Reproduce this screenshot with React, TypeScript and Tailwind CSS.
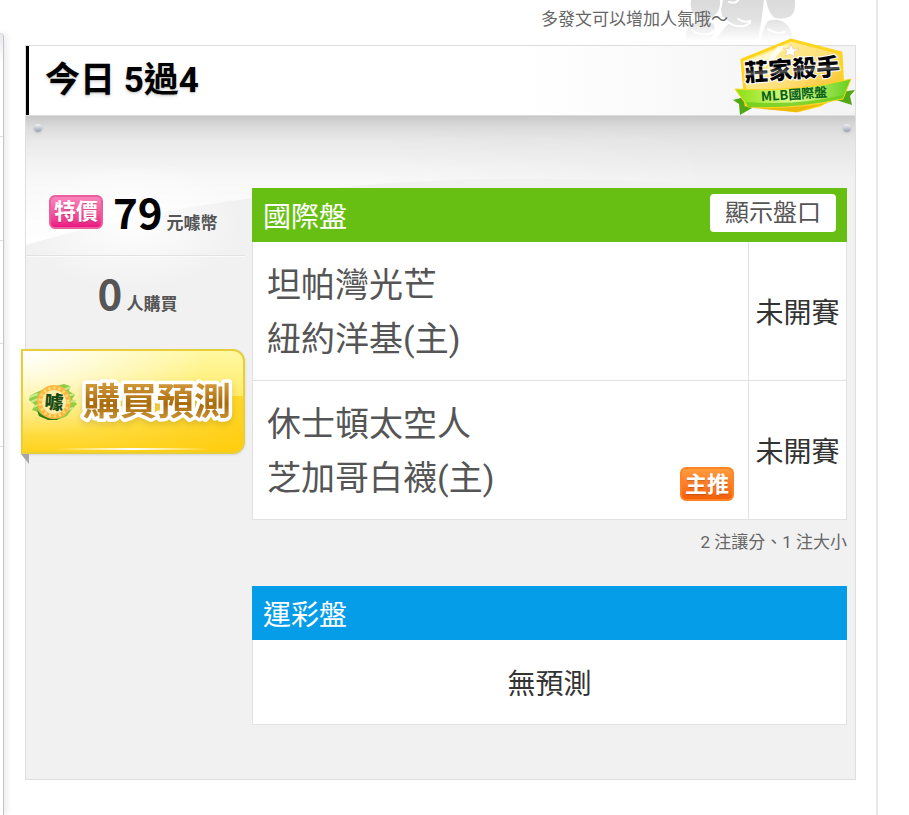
import { useState } from 'react';

type Game = {
  away: string;
  home: string;
  status: string;
  featured?: boolean;
};

const games: Game[] = [
  { away: '坦帕灣光芒', home: '紐約洋基(主)', status: '未開賽' },
  { away: '休士頓太空人', home: '芝加哥白襪(主)', status: '未開賽', featured: true },
];

function MascotMark() {
  return (
    <svg className="absolute top-0 right-20 h-10 w-28" viewBox="0 0 112 40" aria-hidden="true">
      <defs>
        <linearGradient id="mascot" x1="0" y1="0" x2="0" y2="40" gradientUnits="userSpaceOnUse">
          <stop offset="0" stopColor="#dadada" />
          <stop offset="0.5" stopColor="#e2e2e2" />
          <stop offset="1" stopColor="#fdfdfd" />
        </linearGradient>
      </defs>
      <g fill="url(#mascot)">
        <path d="M7 0H36Q37 8 32 14Q26 21 17 19Q5 15 7 0Z" />
        <path d="M4 28Q10 20 22 21Q33 22 30 32L27 40H2Q1 33 4 28Z" />
        <path d="M39 0H80Q78 20 74 40H31Q38 30 45 23Q37 18 37 10Z" />
        <path d="M82 0H111Q112 11 107 16Q100 20 91 18Q85 15 82 0Z" />
        <path d="M84 21Q96 17 103 25Q110 32 107 40H77Q79 28 84 21Z" />
      </g>
      <g fill="none" stroke="#fff" strokeWidth="2" strokeLinecap="round">
        <path d="M45 2Q52 4 54 0M40 18Q48 28 60 26Q67 24 66 21Q60 23 54 19" />
        <path d="M8 30Q17 37 28 33Q30 31 28 30M84 29Q92 35 101 32" />
      </g>
    </svg>
  );
}

function KillerBadge() {
  return (
    <svg className="absolute -top-2 right-0 h-20 w-31" viewBox="0 0 124 80" role="img" aria-label="莊家殺手 MLB國際盤">
      <defs>
        <linearGradient id="shield" x1="0" y1="0" x2="1" y2="1">
          <stop offset="0" stopColor="#fff5a8" />
          <stop offset="0.5" stopColor="#ffe07a" />
          <stop offset="1" stopColor="#f5b400" />
        </linearGradient>
        <linearGradient id="ribbon" x1="0" y1="0" x2="1" y2="0">
          <stop offset="0" stopColor="#8be00d" />
          <stop offset="0.5" stopColor="#dcfc91" />
          <stop offset="1" stopColor="#65cf1b" />
        </linearGradient>
        <linearGradient id="ink" x1="0" y1="0" x2="0" y2="1">
          <stop offset="0.45" stopColor="#000" />
          <stop offset="0.6" stopColor="#555" />
          <stop offset="0.68" stopColor="#000" />
        </linearGradient>
      </defs>
      <g transform="translate(1 -1)">
        <path d="M1 63L16 59L20 71L8 78L7 67Z" fill="#50a914" />
        <path d="M108 55L123 53L118 59L120 68L104 63Z" fill="#50a914" />
        <path d="M10 23L59 3L109 16L111 54L88 68L65 74L14 68Z" fill="url(#shield)" stroke="#ffd51b" strokeWidth="3" />
        <path d="M13 25L58 7L45 18L31 25L25 41L13 44Z" fill="#fff8c8" />
        <path d="M46 9L30 31L41 25L52 9Z" fill="#fff" opacity="0.8" />
        <path d="M59 7L61 12L67 12L62 15L63 20L58 17L53 19L55 14L51 11L57 12Z" fill="#fff" stroke="#e8b98c" strokeWidth="0.5" />
        <path d="M3 52Q62 56 119 42L111 62Q65 72 16 70Z" fill="url(#ribbon)" stroke="#ffd51b" strokeWidth="1" />
        <path d="M14 65Q65 69 112 58L111 61Q65 72 16 70Z" fill="#6fcb1a" opacity="0.8" />
        <path d="M20 71Q68 72 99 65L65 75Z" fill="#eabb0c" />
        <g transform="rotate(-4 62 42)" fontFamily="'Noto Sans CJK TC', sans-serif" fontWeight="900" textAnchor="middle">
          <text x="61" y="41" fontSize="24" stroke="#fff" strokeWidth="2" paintOrder="stroke" fill="url(#ink)">莊家殺手</text>
          <text x="61" y="62" fontSize="13" fontWeight="700" fill="#075e18">MLB國際盤</text>
        </g>
      </g>
    </svg>
  );
}

function CoinIcon() {
  return (
    <svg className="h-10 w-12 shrink-0" viewBox="0 0 48 40" aria-hidden="true">
      <path d="M1 14L6 11L15 7L35 2L41 4L40 9L46 13L43 17L48 22L43 27L38 34L31 37L20 38L10 34L9 30L3 28L6 23L0 18Z" fill="#8fcd45" />
      <path d="M1 15L9 12M2 20L11 16M5 25L12 21M34 8L42 5M37 14L46 12M37 20L47 19M35 29L44 26" stroke="#c8ec8c" strokeWidth="2" />
      <path d="M8 28Q16 39 32 35L28 38H19L10 34Z" fill="#397a16" />
      <circle cx="25" cy="20" r="17" fill="#ffb743" />
      <circle cx="25" cy="20" r="14" fill="none" stroke="#ffe27a" strokeWidth="3" strokeDasharray="2 3" />
      <circle cx="25" cy="20" r="12" fill="#ffeea8" />
      <text x="25" y="27" fontSize="19" fontWeight="900" textAnchor="middle" fill="#184b14" fontFamily="'Noto Sans CJK TC', sans-serif" transform="rotate(5 25 20)">噱</text>
    </svg>
  );
}

function Screw() {
  return <span className="size-2 rounded-full bg-linear-to-b from-gray-100 to-gray-400 shadow-sm" />;
}

function PurchasePanel() {
  return (
    <div className="w-[219px] shrink-0 font-bold text-[#555]">
      <div className="flex h-[68px] items-start border-b border-[#e2e2e2] pl-[23px]">
        <span className="mt-[7px] flex h-[34px] w-[54px] items-center justify-center rounded-md border-2 border-[#e8609c] bg-linear-to-b from-[#ff82bc] to-[#ec1283] text-[22px] leading-none text-white text-shadow-sm">
          特價
        </span>
        <p className="ml-2.5 flex items-baseline whitespace-nowrap">
          <span className="font-['Noto_Sans_CJK_TC',sans-serif] text-[42px] leading-[46px] text-black">79</span>
          <span className="ml-1 text-[17px]">元噱幣</span>
        </p>
      </div>
      <p className="flex h-[93px] items-baseline justify-center border-t border-white/70 pt-3 pl-1">
        <span className="font-['Noto_Sans_CJK_TC',sans-serif] text-[42px] leading-[46px]">0</span>
        <span className="ml-1 text-[17px]">人購買</span>
      </p>
      <div className="relative -ml-[5px] w-[224px]">
        <button
          type="button"
          className="relative flex h-[105px] w-full cursor-pointer items-center rounded-r-xl border-2 border-[#e8ce39] bg-linear-to-b from-[#fff9a2] via-[#ffe95f] to-[#ffd31d] pl-1.5 shadow-sm"
        >
          <span className="absolute inset-0 rounded-r-xl bg-radial-[at_0%_0%] from-white to-transparent to-60%" />
          <span className="absolute right-0 bottom-0 h-14 w-40 rounded-br-xl bg-linear-to-r from-transparent to-[#ffc800]/60" />
          <span className="absolute inset-x-8 bottom-0.5 h-0.5 bg-linear-to-r from-transparent via-white to-transparent" />
          <span className="relative flex items-center gap-1.5">
            <CoinIcon />
            <svg className="h-15 w-[154px] overflow-visible" viewBox="0 0 154 60" role="img" aria-label="購買預測">
              <defs>
                <linearGradient id="gold" x1="0" y1="0" x2="0" y2="1">
                  <stop offset="0.2" stopColor="#d29b3c" />
                  <stop offset="0.6" stopColor="#a86a0b" />
                  <stop offset="1" stopColor="#dba848" />
                </linearGradient>
              </defs>
              <text
                x="0"
                y="43"
                fontSize="37"
                fontWeight="700"
                fontFamily="'Noto Sans CJK TC', sans-serif"
                fill="url(#gold)"
                stroke="#fff"
                strokeWidth="7"
                strokeLinejoin="round"
                paintOrder="stroke"
                className="drop-shadow-md"
              >
                購買預測
              </text>
            </svg>
          </span>
        </button>
        <svg className="absolute top-full left-0 h-2.5 w-2" viewBox="0 0 8 10" aria-hidden="true">
          <path d="M0 0H8V10Z" fill="#a7a7a7" />
        </svg>
      </div>
    </div>
  );
}

function GameTable() {
  const [showLines, setShowLines] = useState(false);

  return (
    <section>
      <div className="flex h-[54px] items-start justify-between bg-[#68bf14] px-[11px] text-white">
        <h2 className="text-[28px] leading-[60px]">國際盤</h2>
        <button
          type="button"
          aria-pressed={showLines}
          onClick={() => setShowLines(!showLines)}
          className="mt-1.5 h-[38px] w-[126px] cursor-pointer rounded-sm bg-white text-[24px] leading-9 text-[#555]"
        >
          顯示盤口
        </button>
      </div>
      <table className="w-full border-collapse bg-white">
        <tbody>
          {games.map((game) => (
            <tr key={game.home}>
              <td className="border border-t-0 border-[#e2e2e2] px-3.5 pt-4 pb-3.5">
                <div className="flex items-end justify-between text-[34px] leading-[54px] text-[#555]">
                  <div>
                    <div>{game.away}</div>
                    <div>{game.home}</div>
                  </div>
                  {game.featured && (
                    <span className="mb-1 flex h-[34px] w-[54px] items-center justify-center rounded-md border-2 border-[#ff8426] bg-linear-to-b from-[#ff9a3d] to-[#f85f08] pt-0.5 text-[22px] leading-none font-bold text-white text-shadow-sm">
                      主推
                    </span>
                  )}
                </div>
              </td>
              <td className="w-[98px] border border-t-0 border-[#e2e2e2] pt-1.5 text-center text-[28px] whitespace-nowrap text-[#333]">
                {game.status}
              </td>
            </tr>
          ))}
        </tbody>
      </table>
      <p className="pt-2 text-right text-[17px] leading-7 text-[#666]">2 注讓分、1 注大小</p>
    </section>
  );
}

export default function App() {
  return (
    <div className="flex min-h-screen bg-white font-[Roboto,'Noto_Sans_CJK_TC',sans-serif]">
      <aside className="w-1 shrink-0 pt-[33px]">
        <div className="h-full rounded-tr-sm border-r border-[#c4c4c4] bg-linear-to-b from-gray-200 to-white to-[28px] pt-[103px] shadow-[2px_0_6px_rgba(0,0,0,0.12)]">
          <div className="h-[104px] border-t border-[#ddd]" />
          <div className="h-[103px] border-t border-[#ddd]" />
          <div className="h-[103px] border-t border-[#ddd]" />
          <div className="border-t border-[#ddd]" />
        </div>
      </aside>
      <main className="relative mr-[31px] min-w-0 flex-1 border-r-2 border-[#e9e9e9] pr-5 pl-[21px]">
        <MascotMark />
        <p className="relative pt-[5px] pr-32 text-right text-[17px] leading-7 text-[#666]">多發文可以增加人氣哦～</p>
        <article className="relative mt-3 border border-[#dedede] bg-[#f1f1f1]">
          <header className="relative z-10 flex h-[69px] items-center border-l-3 border-black bg-linear-to-r from-white from-60% to-[#f3f3f3] pl-4">
            <h1 className="text-[35px] leading-[68px] font-bold text-black text-shadow-md">今日 5過4</h1>
            <KillerBadge />
          </header>
          <div className="relative border-t border-[#ddd]">
            <svg className="absolute inset-x-0 top-0 h-44 w-full" viewBox="0 0 829 176" preserveAspectRatio="none" aria-hidden="true">
              <defs>
                <linearGradient id="top-shade" x1="0" y1="0" x2="0" y2="1">
                  <stop offset="0" stopColor="#c8c8c8" />
                  <stop offset="0.06" stopColor="#dadada" />
                  <stop offset="0.14" stopColor="#e5e5e5" />
                  <stop offset="0.35" stopColor="#f1f1f1" />
                </linearGradient>
                <linearGradient id="sheen" x1="0" y1="0" x2="0" y2="1">
                  <stop offset="0.05" stopColor="#fff" stopOpacity="0" />
                  <stop offset="0.8" stopColor="#fff" stopOpacity="0.8" />
                  <stop offset="1" stopColor="#fff" stopOpacity="0.9" />
                </linearGradient>
                <linearGradient id="fade">
                  <stop offset="0.5" stopColor="#fff" />
                  <stop offset="1" stopColor="#000" />
                </linearGradient>
                <mask id="sheen-mask">
                  <rect width="720" height="176" fill="url(#fade)" />
                </mask>
                <radialGradient id="glow">
                  <stop offset="0" stopColor="#fff" stopOpacity="0.9" />
                  <stop offset="1" stopColor="#fff" stopOpacity="0" />
                </radialGradient>
              </defs>
              <rect width="829" height="176" fill="url(#top-shade)" />
              <path d="M0 0H720V72Q450 50 245 80Q120 94 0 129Z" fill="url(#sheen)" mask="url(#sheen-mask)" />
              <ellipse cx="105" cy="108" rx="110" ry="66" fill="url(#glow)" />
            </svg>
            <div className="relative flex justify-between pt-2 pr-1 pl-2">
              <Screw />
              <Screw />
            </div>
            <div className="relative flex gap-[7px] pt-14 pr-2 pb-[54px]">
              <PurchasePanel />
              <div className="min-w-0 flex-1">
                <GameTable />
                <section className="mt-[30px]">
                  <h2 className="h-[54px] bg-[#059ce8] pl-[11px] text-[28px] leading-[60px] text-white">運彩盤</h2>
                  <p className="border border-t-0 border-[#e2e2e2] bg-white pt-1.5 text-center text-[28px] leading-[78px] text-[#333]">
                    無預測
                  </p>
                </section>
              </div>
            </div>
          </div>
        </article>
      </main>
    </div>
  );
}
